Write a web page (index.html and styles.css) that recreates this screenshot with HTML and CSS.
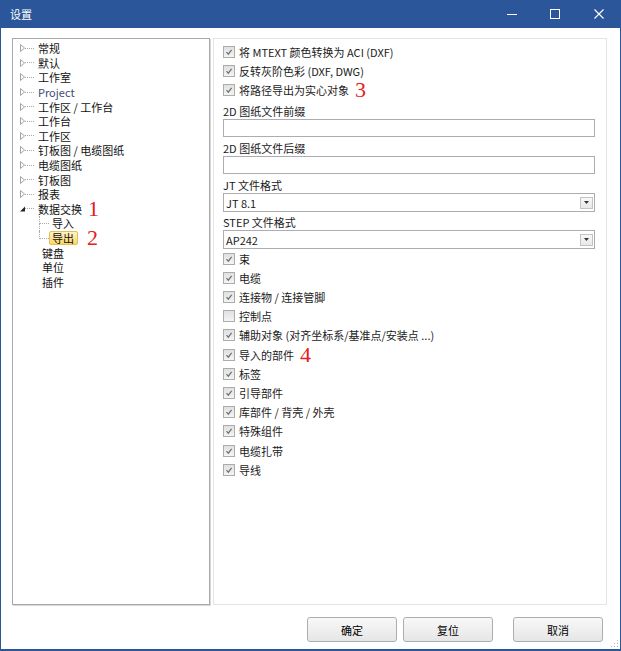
FILE: index.html
```html
<!DOCTYPE html>
<html lang="zh-CN">
<head>
  <meta charset="UTF-8" />
  <title>设置</title>
  <link rel="stylesheet" href="styles.css">
</head>
<body>
  <div class="window">
    <div class="titlebar">
      <span class="title">设置</span>
      <div class="controls">
        <svg width="10" height="10"><path d="M0 5.5h10" stroke="#fff" /></svg>
        <svg width="10" height="10" class="max"><rect x="0.5" y="0.5" width="9" height="9" fill="none" stroke="#fff" /></svg>
        <svg width="10" height="10" class="close"><path d="M0.5 0.5L9.5 9.5M9.5 0.5L0.5 9.5" stroke="#fff" stroke-width="1.1" /></svg>
      </div>
    </div>

    <div class="body">
      <div class="panes">
        <ul class="tree">
          <li><svg class="tw" width="5" height="8"><path d="M0.5 0.5L4.5 4L0.5 7.5Z" fill="none" stroke="#a3a3a3" /></svg><span class="dots"></span><span class="label">常规</span></li>
          <li><svg class="tw" width="5" height="8"><path d="M0.5 0.5L4.5 4L0.5 7.5Z" fill="none" stroke="#a3a3a3" /></svg><span class="dots"></span><span class="label">默认</span></li>
          <li><svg class="tw" width="5" height="8"><path d="M0.5 0.5L4.5 4L0.5 7.5Z" fill="none" stroke="#a3a3a3" /></svg><span class="dots"></span><span class="label">工作室</span></li>
          <li><svg class="tw" width="5" height="8"><path d="M0.5 0.5L4.5 4L0.5 7.5Z" fill="none" stroke="#a3a3a3" /></svg><span class="dots"></span><span class="label project">Project</span></li>
          <li><svg class="tw" width="5" height="8"><path d="M0.5 0.5L4.5 4L0.5 7.5Z" fill="none" stroke="#a3a3a3" /></svg><span class="dots"></span><span class="label">工作区 / 工作台</span></li>
          <li><svg class="tw" width="5" height="8"><path d="M0.5 0.5L4.5 4L0.5 7.5Z" fill="none" stroke="#a3a3a3" /></svg><span class="dots"></span><span class="label">工作台</span></li>
          <li><svg class="tw" width="5" height="8"><path d="M0.5 0.5L4.5 4L0.5 7.5Z" fill="none" stroke="#a3a3a3" /></svg><span class="dots"></span><span class="label">工作区</span></li>
          <li><svg class="tw" width="5" height="8"><path d="M0.5 0.5L4.5 4L0.5 7.5Z" fill="none" stroke="#a3a3a3" /></svg><span class="dots"></span><span class="label">钉板图 / 电缆图纸</span></li>
          <li><svg class="tw" width="5" height="8"><path d="M0.5 0.5L4.5 4L0.5 7.5Z" fill="none" stroke="#a3a3a3" /></svg><span class="dots"></span><span class="label">电缆图纸</span></li>
          <li><svg class="tw" width="5" height="8"><path d="M0.5 0.5L4.5 4L0.5 7.5Z" fill="none" stroke="#a3a3a3" /></svg><span class="dots"></span><span class="label">钉板图</span></li>
          <li><svg class="tw" width="5" height="8"><path d="M0.5 0.5L4.5 4L0.5 7.5Z" fill="none" stroke="#a3a3a3" /></svg><span class="dots"></span><span class="label">报表</span></li>
          <li><svg class="tw" width="5" height="6"><path d="M5 0.5V5.5H0Z" fill="#262626" /></svg><span class="dots"></span><span class="label">数据交换</span><span class="mark m1">1</span></li>
          <li class="child"><span class="elbow"><i></i><i></i></span><span class="label">导入</span></li>
          <li class="child last"><span class="elbow"><i></i><i></i></span><span class="sel">导出</span><span class="mark m2">2</span></li>
          <li class="leaf"><span class="label">键盘</span></li>
          <li class="leaf"><span class="label">单位</span></li>
          <li class="leaf"><span class="label">插件</span></li>
        </ul>

        <div class="options">
          <div class="check"><span class="box"><svg width="10" height="10"><path d="M2.5 5.2L4.3 7.2L7.6 2.8" fill="none" stroke="#707070" stroke-width="1.2" /></svg></span>将 MTEXT 颜色转换为 ACI (DXF)</div>
          <div class="check"><span class="box"><svg width="10" height="10"><path d="M2.5 5.2L4.3 7.2L7.6 2.8" fill="none" stroke="#707070" stroke-width="1.2" /></svg></span>反转灰阶色彩 (DXF, DWG)</div>
          <div class="check"><span class="box"><svg width="10" height="10"><path d="M2.5 5.2L4.3 7.2L7.6 2.8" fill="none" stroke="#707070" stroke-width="1.2" /></svg></span>将路径导出为实心对象<span class="mark m3">3</span></div>

          <div class="field-label">2D 图纸文件前缀</div>
          <div class="text-input"></div>
          <div class="field-label">2D 图纸文件后缀</div>
          <div class="text-input"></div>
          <div class="field-label">JT 文件格式</div>
          <div class="select"><span>JT 8.1</span><span class="drop"><svg width="5" height="3"><path d="M0 0H5L2.5 3Z" fill="#333" /></svg></span></div>
          <div class="field-label step">STEP 文件格式</div>
          <div class="select"><span>AP242</span><span class="drop"><svg width="5" height="3"><path d="M0 0H5L2.5 3Z" fill="#333" /></svg></span></div>

          <div class="check"><span class="box"><svg width="10" height="10"><path d="M2.5 5.2L4.3 7.2L7.6 2.8" fill="none" stroke="#707070" stroke-width="1.2" /></svg></span>束</div>
          <div class="check"><span class="box"><svg width="10" height="10"><path d="M2.5 5.2L4.3 7.2L7.6 2.8" fill="none" stroke="#707070" stroke-width="1.2" /></svg></span>电缆</div>
          <div class="check"><span class="box"><svg width="10" height="10"><path d="M2.5 5.2L4.3 7.2L7.6 2.8" fill="none" stroke="#707070" stroke-width="1.2" /></svg></span>连接物 / 连接管脚</div>
          <div class="check"><span class="box"></span>控制点</div>
          <div class="check"><span class="box"><svg width="10" height="10"><path d="M2.5 5.2L4.3 7.2L7.6 2.8" fill="none" stroke="#707070" stroke-width="1.2" /></svg></span>辅助对象 (对齐坐标系/基准点/安装点 ...)</div>
          <div class="check"><span class="box"><svg width="10" height="10"><path d="M2.5 5.2L4.3 7.2L7.6 2.8" fill="none" stroke="#707070" stroke-width="1.2" /></svg></span>导入的部件<span class="mark m4">4</span></div>
          <div class="check"><span class="box"><svg width="10" height="10"><path d="M2.5 5.2L4.3 7.2L7.6 2.8" fill="none" stroke="#707070" stroke-width="1.2" /></svg></span>标签</div>
          <div class="check"><span class="box"><svg width="10" height="10"><path d="M2.5 5.2L4.3 7.2L7.6 2.8" fill="none" stroke="#707070" stroke-width="1.2" /></svg></span>引导部件</div>
          <div class="check"><span class="box"><svg width="10" height="10"><path d="M2.5 5.2L4.3 7.2L7.6 2.8" fill="none" stroke="#707070" stroke-width="1.2" /></svg></span>库部件 / 背壳 / 外壳</div>
          <div class="check"><span class="box"><svg width="10" height="10"><path d="M2.5 5.2L4.3 7.2L7.6 2.8" fill="none" stroke="#707070" stroke-width="1.2" /></svg></span>特殊组件</div>
          <div class="check"><span class="box"><svg width="10" height="10"><path d="M2.5 5.2L4.3 7.2L7.6 2.8" fill="none" stroke="#707070" stroke-width="1.2" /></svg></span>电缆扎带</div>
          <div class="check"><span class="box"><svg width="10" height="10"><path d="M2.5 5.2L4.3 7.2L7.6 2.8" fill="none" stroke="#707070" stroke-width="1.2" /></svg></span>导线</div>
        </div>
      </div>

      <div class="actions">
        <button class="btn">确定</button>
        <button class="btn">复位</button>
        <button class="btn cancel">取消</button>
      </div>
    </div>

    <svg class="grip" width="8" height="8">
      <rect x="6" y="0" width="1" height="1" fill="#b5b5b5" />
      <rect x="3" y="3" width="1" height="1" fill="#b5b5b5" />
      <rect x="6" y="3" width="1" height="1" fill="#b5b5b5" />
      <rect x="0" y="6" width="1" height="1" fill="#b5b5b5" />
      <rect x="3" y="6" width="1" height="1" fill="#b5b5b5" />
      <rect x="6" y="6" width="1" height="1" fill="#b5b5b5" />
    </svg>
  </div>
</body>
</html>
```

FILE: styles.css
```css
* {
  box-sizing: border-box;
}
body {
  margin: 0;
  font-family: "Noto Sans CJK SC", sans-serif;
  font-size: 11px;
  color: #000;
  background: #fff;
}
.window {
  position: relative;
  width: 621px;
  height: 651px;
  border: 1px solid #2b579a;
  border-top: 0;
  border-bottom-width: 2px;
  background: #fff;
  display: flex;
  flex-direction: column;
}
.titlebar {
  height: 28px;
  flex: none;
  background: #2b579a;
  color: #fff;
  display: flex;
  align-items: center;
  padding: 0 16px 0 9px;
}
.title {
  flex: 1;
  font-size: 11px;
}
.controls {
  display: flex;
  align-items: center;
}
.controls svg {
  display: block;
}
.controls .max {
  margin-left: 33px;
}
.controls .close {
  margin-left: 34px;
}
.body {
  flex: 1;
  padding: 10px 13px 0 11px;
  display: flex;
  flex-direction: column;
}
.panes {
  height: 567px;
  display: flex;
  gap: 3px;
}
.tree {
  width: 198px;
  flex: none;
  margin: 0;
  padding: 2px 0 0 7px;
  list-style: none;
  border: 1px solid #a8a8a8;
  box-shadow: 1px 1px 0 #d8d8d8;
  color: #111;
}
.tree li {
  height: 14.6px;
  display: flex;
  align-items: center;
  white-space: nowrap;
  line-height: 14px;
}
.tw {
  display: block;
  flex: none;
}
.dots {
  width: 9px;
  border-top: 1px dotted #a8a8a8;
}
.label {
  margin-left: 4px;
}
.project {
  color: #3d4a78;
}
.leaf {
  padding-left: 18px;
}
.child {
  padding-left: 19px;
}
.elbow {
  align-self: stretch;
  width: 10px;
  display: flex;
  flex-direction: column;
}
.elbow i {
  flex: 1;
  border-left: 1px dotted #a8a8a8;
}
.elbow i:first-child {
  border-bottom: 1px dotted #a8a8a8;
}
.last .elbow i:last-child {
  border-left: 0;
}
.child .label {
  margin-left: 3px;
}
.sel {
  line-height: 12px;
  padding: 0 3px 0 2px;
  border: 1px solid #e2bf5a;
  border-radius: 2px;
  background: linear-gradient(#fef3c6, #fbd868);
}
.mark {
  font-family: "Liberation Serif", serif;
  font-size: 22px;
  line-height: 14px;
  color: #e5201c;
}
.m1 {
  margin-left: 6px;
}
.m2 {
  margin-left: 9px;
}
.m3 {
  margin-left: 6px;
}
.m4 {
  margin-left: 6px;
}
.options {
  flex: 1;
  border: 1px solid #e4e4e4;
  padding: 3.5px 11px 0 9px;
  color: #1a1a1a;
}
.check {
  height: 19.2px;
  display: flex;
  align-items: center;
  white-space: nowrap;
}
.box {
  width: 12px;
  height: 12px;
  flex: none;
  margin-right: 4px;
  border: 1px solid #acacac;
  background: linear-gradient(#e0e0e0, #f4f4f4);
}
.box svg {
  display: block;
}
.field-label {
  height: 15px;
  line-height: 15px;
  margin-top: 4px;
}
.field-label:first-of-type {
  margin-top: 2px;
}
.field-label.step {
  margin-top: 3px;
}
.text-input {
  height: 18px;
  border: 1px solid #abadb3;
  background: #fff;
}
.select {
  height: 19px;
  border: 1px solid #abadb3;
  display: flex;
  align-items: center;
  justify-content: space-between;
  padding: 0 1px 0 2px;
}
.drop {
  width: 13px;
  height: 12px;
  border: 1px solid #c3c3c3;
  background: linear-gradient(#f8f8f8, #e8e8e8);
  display: flex;
  align-items: center;
  justify-content: center;
}
.drop svg {
  display: block;
}
.actions {
  display: flex;
  justify-content: flex-end;
  margin-top: 12px;
  padding-right: 4px;
}
.btn {
  width: 90px;
  height: 25px;
  font-family: inherit;
  font-size: 11px;
  color: #000;
  border: 1px solid #adadad;
  border-radius: 3px;
  background: linear-gradient(#f8f8f8, #e6e6e6);
}
.btn + .btn {
  margin-left: 6px;
}
.btn.cancel {
  margin-left: 20px;
}
.grip {
  position: absolute;
  right: 1px;
  bottom: 1px;
}
```
